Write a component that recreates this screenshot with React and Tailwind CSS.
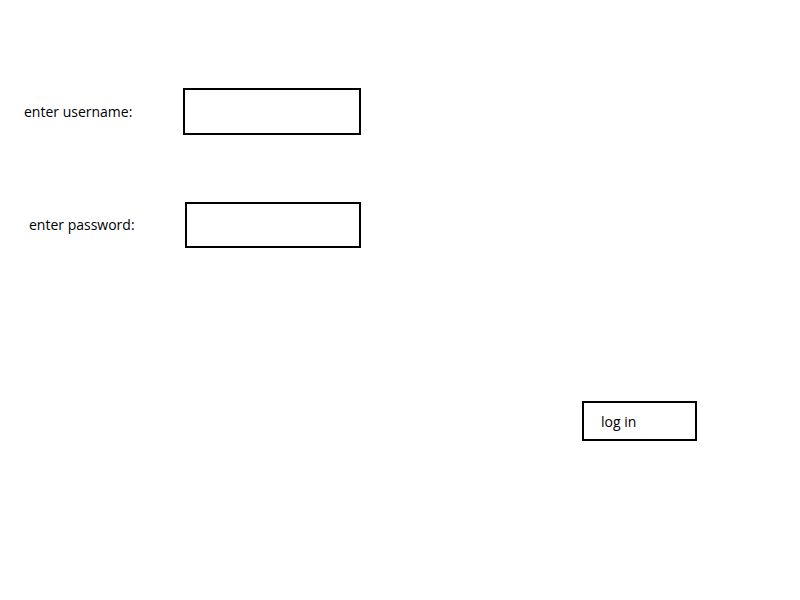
import React from 'react';

const App = () => {
    return (
        <div className="w-[800px] h-[600px] bg-white text-black font-['Open_Sans',sans-serif] text-[14px] pt-[88px]">
            <div className="flex items-center h-[47px]">
                <label className="ml-[24px] w-[159px]">enter username:</label>
                <input type="text" className="w-[178px] h-[47px] border-2 border-black outline-none px-2" />
            </div>
            <div className="flex items-center h-[46px] mt-[67px]">
                <label className="ml-[29px] w-[156px] pb-[2px]">enter password:</label>
                <input type="password" className="w-[176px] h-[46px] border-2 border-black outline-none px-2" />
            </div>
            <button className="block mt-[153px] ml-[582px] w-[115px] h-[40px] border-2 border-black text-left pl-[17px] text-[14px]">
                log in
            </button>
        </div>
    );
};

export default App;
